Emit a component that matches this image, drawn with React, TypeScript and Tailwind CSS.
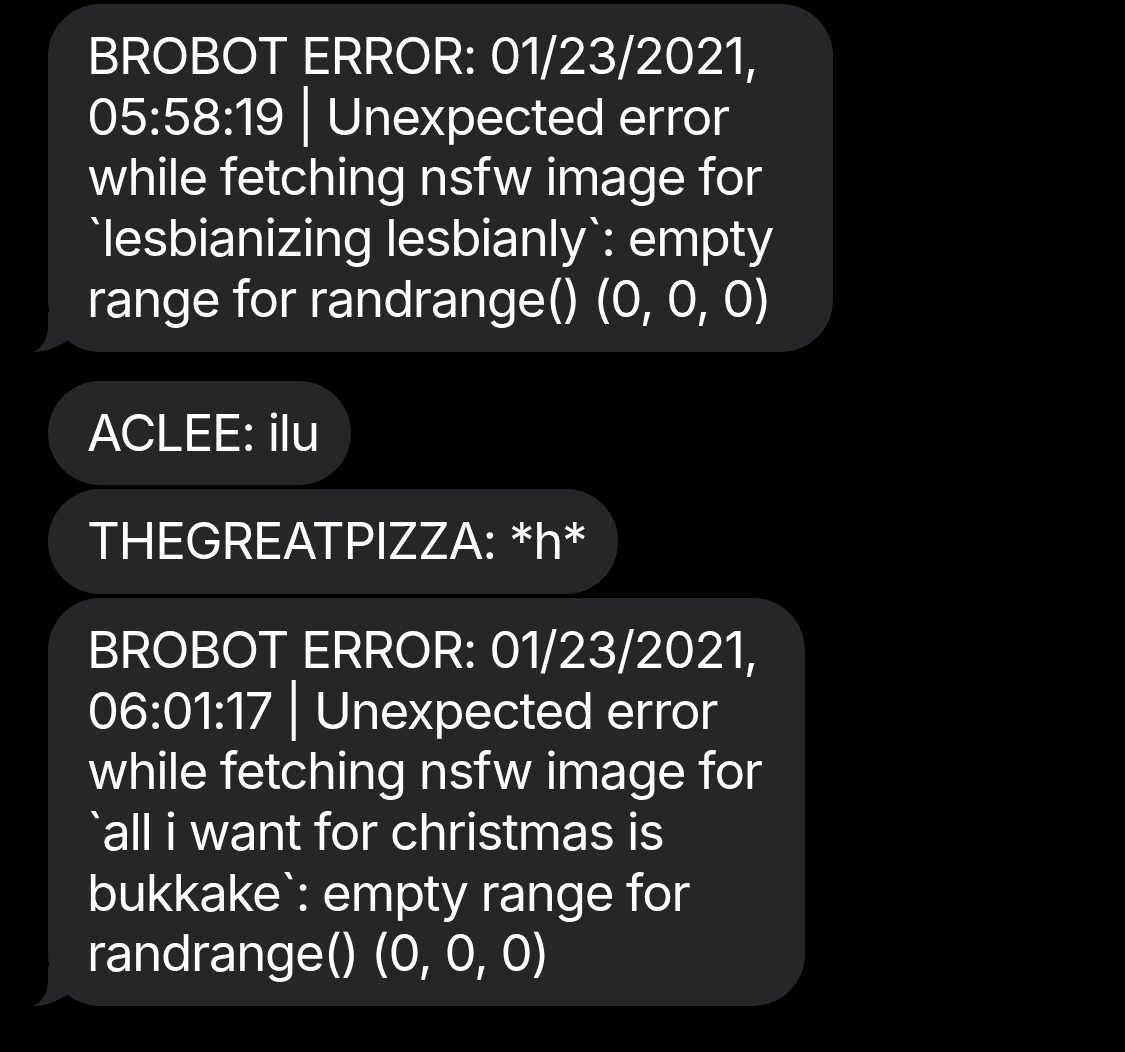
type BubbleProps = {
  lines: string[];
  tail?: boolean;
  className?: string;
};

function Tail() {
  return (
    <svg
      className="absolute left-[-15px] bottom-0"
      width="40"
      height="40"
      viewBox="0 0 40 40"
    >
      <path
        d="M15 0 L15 14 C15 27 9 36 0 40 C9 40 22 37 34 29 L34 0 Z"
        fill="#262628"
      />
    </svg>
  );
}

function Bubble({ lines, tail, className }: BubbleProps) {
  return (
    <div
      className={`relative bg-[#262628] rounded-[52px] pl-[39px] py-[22px] text-white text-[51px] leading-[60.7px] tracking-[-1.3px] whitespace-nowrap ${className ?? ""}`}
    >
      {lines.map((l, i) => (
        <div key={i}>{l}</div>
      ))}
      {tail && <Tail />}
    </div>
  );
}

export default function App() {
  return (
    <div
      className="min-h-screen w-full bg-black pt-[4px] pl-[48px] flex flex-col items-start"
      style={{ fontFamily: "Inter, 'Liberation Sans', sans-serif" }}
    >
      <Bubble
        tail
        className="w-[785px]"
        lines={[
          "BROBOT ERROR: 01/23/2021,",
          "05:58:19 | Unexpected error",
          "while fetching nsfw image for",
          "`lesbianizing lesbianly`: empty",
          "range for randrange() (0, 0, 0)",
        ]}
      />
      <Bubble className="mt-[29px] pr-[32px]" lines={["ACLEE: ilu"]} />
      <Bubble className="mt-[4px] pr-[32px]" lines={["THEGREATPIZZA: *h*"]} />
      <Bubble
        tail
        className="mt-[4px] w-[757px]"
        lines={[
          "BROBOT ERROR: 01/23/2021,",
          "06:01:17 | Unexpected error",
          "while fetching nsfw image for",
          "`all i want for christmas is",
          "bukkake`: empty range for",
          "randrange() (0, 0, 0)",
        ]}
      />
    </div>
  );
}
